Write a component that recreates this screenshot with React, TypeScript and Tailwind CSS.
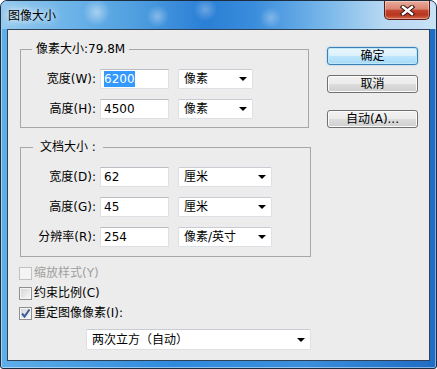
import React from "react";

type FieldProps = {
  label: string;
  value: string;
  unit: string;
  unitW: string;
  selected?: boolean;
};

const Arrow = () => (
  <svg width="8" height="4" viewBox="0 0 8 4">
    <path d="M0 0h8L4 4z" fill="#000" />
  </svg>
);

const Select = ({ text, className }: { text: string; className: string }) => (
  <div
    className={`flex h-[20px] items-center justify-between rounded-[2px] border border-[#dde1e6] border-t-[#c9ccd2] bg-white pl-[5px] pr-[5px] ${className}`}
  >
    <span>{text}</span>
    <Arrow />
  </div>
);

const Field = ({ label, value, unit, unitW, selected }: FieldProps) => (
  <div className="flex h-[20px] items-center">
    <span className="w-[75px] text-right">{label}</span>
    <div className="ml-[4px] flex h-[20px] w-[69px] items-center border border-[#dde1e6] border-t-[#b9bcc3] bg-white pl-[3px]">
      {selected ? <span className="bg-[#3399ff] text-white">{value}</span> : <span>{value}</span>}
    </div>
    <Select text={unit} className={`ml-[9px] ${unitW}`} />
  </div>
);

const Btn = ({ label, primary, className }: { label: string; primary?: boolean; className?: string }) => (
  <button
    className={`flex h-[18px] w-[91px] items-center justify-center rounded-[3px] border ${
      primary
        ? "border-[#3c7fb1] bg-[linear-gradient(#eaf6fd_0%,#d9f0fc_50%,#bee6fd_50%,#a7d9f5_100%)] shadow-[inset_0_0_0_1px_#bde8fc,0_0_2px_#7fc4ef]"
        : "border-[#707070] bg-[linear-gradient(#f2f2f2_0%,#ebebeb_50%,#dddddd_50%,#cfcfcf_100%)] shadow-[inset_0_0_0_1px_#fbfbfb]"
    } ${className ?? ""}`}
  >
    {label}
  </button>
);

const Check = ({ label, checked, disabled }: { label: string; checked?: boolean; disabled?: boolean }) => (
  <div className={`flex h-[20px] items-center ${disabled ? "text-[#a0a0a0]" : ""}`}>
    <div
      className={`-ml-px flex h-[13px] w-[13px] items-center justify-center border ${
        disabled
          ? "border-[#c2c2c2] bg-[#f4f4f4]"
          : "border-[#8e8f8f] bg-[linear-gradient(135deg,#d3d3d3,#f9f9f9)] shadow-[inset_0_0_0_1px_#f4f4f4]"
      }`}
    >
      {checked && (
        <svg width="11" height="11" viewBox="0 0 11 11">
          <path d="M2 5.5 L4.5 8.5 L9.5 1.5" fill="none" stroke="#3b5b9c" strokeWidth="2" />
        </svg>
      )}
    </div>
    <span className="ml-[2px]">{label}</span>
  </div>
);

export default function App() {
  return (
    <div className="h-[369px] w-[437px] bg-white font-['DejaVu_Sans','Noto_Sans_CJK_SC',sans-serif] text-[12px] leading-[16px] text-black">
      <div className="flex h-full w-full flex-col overflow-hidden rounded-t-[7px] rounded-b-[3px] border border-[#1d2d40] bg-[linear-gradient(90deg,#5eaee8_0%,#2f8ade_40%,#3b8fdc_70%,#1f6cc4_100%)] shadow-[inset_0_0_0_1px_rgba(255,255,255,0.45)]">
        <div className="flex h-[28px] shrink-0 items-start justify-between bg-[radial-gradient(circle_at_22%_40%,rgba(255,255,255,0.45),transparent_4%),radial-gradient(circle_at_36%_55%,rgba(255,255,255,0.35),transparent_4%),radial-gradient(circle_at_47%_30%,rgba(255,255,255,0.3),transparent_5%),radial-gradient(circle_at_62%_60%,rgba(255,255,255,0.3),transparent_4%),linear-gradient(90deg,#96caee_0%,#6db4e8_15%,#52a0e0_30%,#2a7fd6_47%,#3a8ddc_58%,#7ab8ea_75%,#b7d8f2_88%,#c9e2f5_100%)]">
          <span className="pl-[7px] pt-[7px] [text-shadow:0_0_6px_#fff,0_0_10px_rgba(255,255,255,0.8)]">图像大小</span>
          <button className="mr-[6px] flex h-[19px] w-[46px] items-center justify-center rounded-b-[5px] border border-t-0 border-[#5e1a12] bg-[linear-gradient(#e8ab9c_0%,#d88472_45%,#c3452f_52%,#b8351f_78%,#d66a4c_100%)] shadow-[inset_0_0_0_1px_rgba(255,255,255,0.35)]">
            <svg width="15" height="11" viewBox="0 0 15 11">
              <path d="M3 2 L12 9 M12 2 L3 9" stroke="#3b1510" strokeWidth="4.5" strokeLinecap="square" />
              <path d="M3 2 L12 9 M12 2 L3 9" stroke="#fff" strokeWidth="2.4" strokeLinecap="square" />
            </svg>
          </button>
        </div>

        <div className="mx-[6px] mb-[7px] flex flex-1 border border-[#2f4257] bg-[#ececec]">
          <div className="flex w-[305px] flex-col pl-[12px]">
            <fieldset className="mt-[11px] w-[289px] border border-[#a7a7a7] pb-[8px] pt-[12px]">
              <legend className="ml-[11px] px-[4px]">像素大小:79.8M</legend>
              <div className="flex flex-col gap-[10px]">
                <Field label="宽度(W):" value="6200" unit="像素" unitW="w-[75px]" selected />
                <Field label="高度(H):" value="4500" unit="像素" unitW="w-[75px]" />
              </div>
            </fieldset>

            <fieldset className="mt-[11px] w-[291px] border border-[#a7a7a7] pb-[9px] pt-[12px]">
              <legend className="ml-[12px] px-[7px]">文档大小 :</legend>
              <div className="flex flex-col gap-[10px]">
                <Field label="宽度(D):" value="62" unit="厘米" unitW="w-[94px]" />
                <Field label="高度(G):" value="45" unit="厘米" unitW="w-[94px]" />
                <Field label="分辨率(R):" value="254" unit="像素/英寸" unitW="w-[94px]" />
              </div>
            </fieldset>

            <div className="mt-[6px] flex flex-col">
              <Check label="缩放样式(Y)" disabled />
              <Check label="约束比例(C)" />
              <Check label="重定图像像素(I):" checked />
            </div>

            <Select text="两次立方（自动）" className="ml-[66px] mt-[6px] h-[21px] w-[225px]" />
          </div>

          <div className="ml-[14px] flex flex-col pt-[17px]">
            <Btn label="确定" primary />
            <Btn label="取消" className="mt-[10px]" />
            <Btn label="自动(A)..." className="mt-[17px]" />
          </div>
        </div>
      </div>
    </div>
  );
}
